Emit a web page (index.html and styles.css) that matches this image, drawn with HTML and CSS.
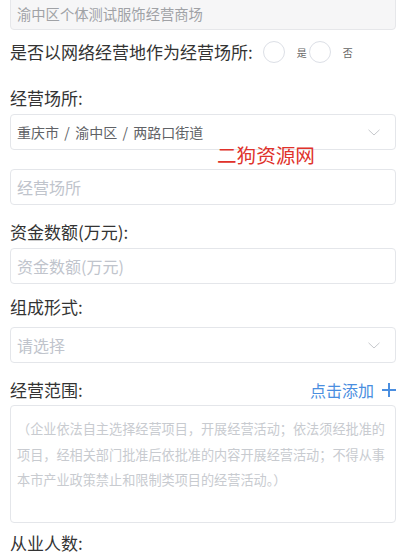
FILE: index.html
```html
<!DOCTYPE html>
<html lang="zh">
<head>
<meta charset="utf-8">
<link rel="stylesheet" href="styles.css">
</head>
<body>
<div class="page">
  <div class="box box-disabled"><span class="val-disabled">渝中区个体测试服饰经营商场</span></div>

  <div class="radio-row">
    <span class="label">是否以网络经营地作为经营场所:</span>
    <span class="radio"><span class="circle"></span><span class="radio-text">是</span></span>
    <span class="radio"><span class="circle"></span><span class="radio-text">否</span></span>
  </div>

  <div class="label lab-a">经营场所:</div>
  <div class="box box-select sel-a">
    <span class="val">重庆市 / 渝中区 / 两路口街道</span>
    <svg class="chev" width="12" height="7" viewBox="0 0 12 7"><path d="M0.5 0.8 L6 6 L11.5 0.8" fill="none" stroke="#c6c8cc" stroke-width="1"/></svg>
  </div>
  <div class="box inp-a"><span class="ph">经营场所</span></div>

  <div class="label lab-b">资金数额(万元):</div>
  <div class="box inp-b"><span class="ph">资金数额(万元)</span></div>

  <div class="label lab-c">组成形式:</div>
  <div class="box box-select sel-c">
    <span class="ph">请选择</span>
    <svg class="chev" width="12" height="7" viewBox="0 0 12 7"><path d="M0.5 0.8 L6 6 L11.5 0.8" fill="none" stroke="#c6c8cc" stroke-width="1"/></svg>
  </div>

  <div class="label-row lab-d">
    <span class="label">经营范围:</span>
    <span class="add">点击添加<svg class="plus" width="14" height="14" viewBox="0 0 14 14"><path d="M7 0 V14 M0 7 H14" stroke="#4a8ee0" stroke-width="2"/></svg></span>
  </div>
  <div class="textarea">（企业依法自主选择经营项目，开展经营活动；依法须经批准的项目，经相关部门批准后依批准的内容开展经营活动；不得从事本市产业政策禁止和限制类项目的经营活动。）</div>

  <div class="label lab-e">从业人数:</div>

  <div class="watermark">二狗资源网</div>
</div>
</body>
</html>
```

FILE: styles.css
```css
html, body {
  margin: 0;
  padding: 0;
  background: #ffffff;
}
body {
  font-family: "Noto Sans CJK SC", "Noto Sans", sans-serif;
  width: 403px;
}
.page {
  position: relative;
  padding: 0 7px 0 10px;
  margin-top: -6px;
}
.box {
  box-sizing: border-box;
  height: 36px;
  border: 1px solid #e4e6ea;
  border-radius: 4px;
  display: flex;
  align-items: center;
  padding: 0 6px;
}
.box-disabled {
  background: #f6f6f7;
  border-color: #e6e7ea;
}
.box-disabled .val-disabled {
  font-size: 14.3px;
  color: #a0a2a6;
  position: relative;
  top: 1px;
}
.box-select {
  justify-content: space-between;
}
.chev {
  margin-right: 9px;
}
.val {
  font-size: 14px;
  color: #606266;
  word-spacing: 2.2px;
}
.ph {
  font-size: 16px;
  color: #c0c4cc;
}
.label {
  font-size: 17px;
  line-height: 24px;
  color: #333333;
}
.radio-row {
  height: 44px;
  display: flex;
  align-items: center;
}
.radio-row .label {
  margin-right: 10px;
}
.radio {
  display: flex;
  align-items: center;
  margin-right: 2px;
}
.circle {
  box-sizing: border-box;
  width: 22px;
  height: 22px;
  border: 1px solid #dcdfe6;
  border-radius: 50%;
  background: #fff;
}
.radio-text {
  font-size: 10px;
  color: #666666;
  margin-left: 12px;
}
.lab-a { margin-top: 12px; }
.sel-a { margin-top: 4px; }
.inp-a { margin-top: 19px; }
.lab-b { margin-top: 15px; }
.inp-b { margin-top: 4px; }
.lab-c { margin-top: 11px; }
.sel-c { margin-top: 8px; }
.label-row {
  display: flex;
  justify-content: space-between;
  align-items: center;
  height: 24px;
}
.lab-d { margin-top: 15px; }
.add {
  font-size: 16px;
  color: #4a8ee0;
  display: flex;
  align-items: center;
}
.plus {
  margin-left: 8px;
}
.textarea {
  box-sizing: border-box;
  margin-top: 3px;
  height: 118px;
  border: 1px solid #e4e6ea;
  border-radius: 4px;
  padding: 10px 7px 0 6px;
  font-size: 13.15px;
  line-height: 25.5px;
  color: #c8cbd0;
}
.lab-e {
  margin-top: 10px;
  line-height: 20px;
}
.watermark {
  position: absolute;
  left: 217px;
  top: 150px;
  font-size: 19.6px;
  line-height: 22px;
  color: #e0322b;
  white-space: nowrap;
}
```
